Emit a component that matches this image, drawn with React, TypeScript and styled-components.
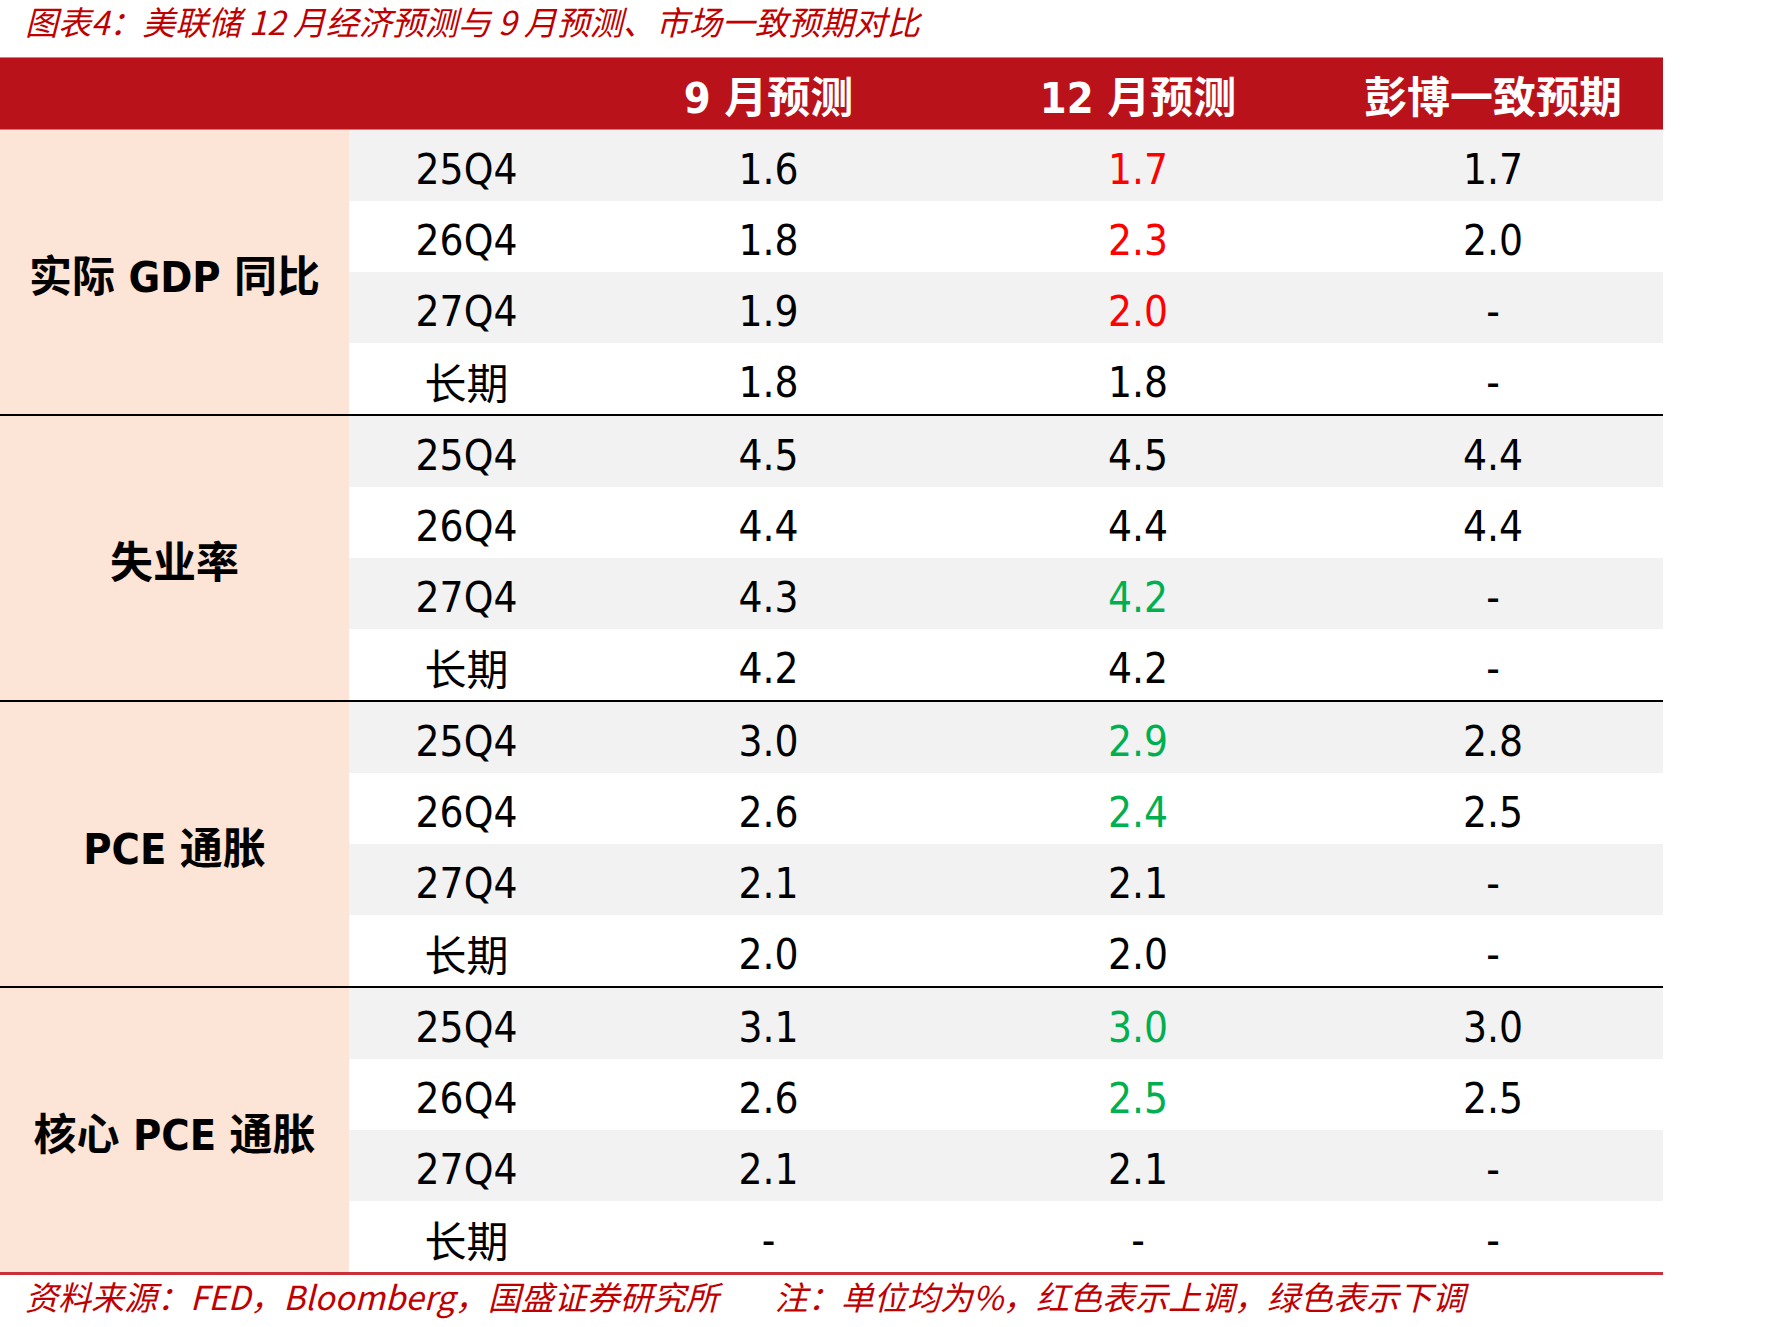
import React from 'react';
import styled, { createGlobalStyle } from 'styled-components';

const Global = createGlobalStyle`
  html, body { margin: 0; padding: 0; background: #ffffff; }
  body { width: 1784px; min-height: 1327px; }
`;

const COLS = '349px 235px 369px 370px 340px';
const TABLE_W = 1663;

const Page = styled.div`
  width: 1784px;
  display: flex;
  flex-direction: column;
`;

const Caption = styled.div`
  height: 57px;
  padding: 2px 0 0 25px;
  box-sizing: border-box;
  font-family: "Noto Sans CJK SC", sans-serif;
  font-style: italic;
  font-size: 33px;
  line-height: 38px;
  color: #c00000;
  white-space: pre;
`;

const Table = styled.div`
  width: ${TABLE_W}px;
  display: flex;
  flex-direction: column;
`;

const HeaderRow = styled.div`
  display: grid;
  grid-template-columns: ${COLS};
  height: 73px;
  box-sizing: border-box;
  background: #b9121b;
  border-top: 1px solid #d97a7f;
  border-bottom: 1px solid #d97a7f;
`;

const HeaderCell = styled.div`
  display: flex;
  align-items: center;
  justify-content: center;
  color: #ffffff;
  font-family: "DejaVu Sans Condensed", "DejaVu Sans", "Noto Sans CJK SC", sans-serif;
  font-weight: 700;
  font-size: 43px;
  white-space: pre;
`;

const Group = styled.div<{ $last?: boolean }>`
  display: grid;
  grid-template-columns: ${COLS};
  grid-template-rows: repeat(4, 71px);
  border-bottom: ${(p) => (p.$last ? '3px solid #c9303a' : '2px solid #000000')};
`;

const Label = styled.div`
  grid-row: 1 / span 4;
  grid-column: 1;
  background: #fce4d6;
  display: flex;
  align-items: center;
  justify-content: center;
  font-family: "DejaVu Sans Condensed", "DejaVu Sans", "Noto Sans CJK SC", sans-serif;
  font-weight: 700;
  font-size: 43px;
  color: #000000;
  white-space: pre;
  padding-top: 2px;
`;

const Cell = styled.div<{ $shade: boolean; $tone?: 'up' | 'down'; $cjk?: boolean }>`
  background: ${(p) => (p.$shade ? '#f2f2f2' : '#ffffff')};
  display: flex;
  align-items: center;
  justify-content: center;
  padding-top: ${(p) => (p.$cjk ? '3px' : '8px')};
  box-sizing: border-box;
  font-family: "DejaVu Sans Condensed", "DejaVu Sans", "Noto Sans CJK SC", sans-serif;
  font-size: 42px;
  color: ${(p) => (p.$tone === 'up' ? '#ff0000' : p.$tone === 'down' ? '#00b050' : '#000000')};
`;

const Footer = styled.div`
  width: ${TABLE_W}px;
  padding-left: 25px;
  box-sizing: border-box;
  display: flex;
  gap: 56px;
  font-family: "Noto Sans CJK SC", sans-serif;
  font-style: italic;
  font-size: 33px;
  line-height: 42px;
  color: #c00000;
  white-space: pre;
`;

type Tone = 'up' | 'down' | undefined;
type Row = { period: string; sep: string; dec: [string, Tone]; bbg: string };

const r = (period: string, sep: string, dec: string, bbg: string, tone?: Tone): Row => ({
  period,
  sep,
  dec: [dec, tone],
  bbg,
});

const groups: { label: string; rows: Row[] }[] = [
  {
    label: '实际 GDP 同比',
    rows: [
      r('25Q4', '1.6', '1.7', '1.7', 'up'),
      r('26Q4', '1.8', '2.3', '2.0', 'up'),
      r('27Q4', '1.9', '2.0', '-', 'up'),
      r('长期', '1.8', '1.8', '-'),
    ],
  },
  {
    label: '失业率',
    rows: [
      r('25Q4', '4.5', '4.5', '4.4'),
      r('26Q4', '4.4', '4.4', '4.4'),
      r('27Q4', '4.3', '4.2', '-', 'down'),
      r('长期', '4.2', '4.2', '-'),
    ],
  },
  {
    label: 'PCE 通胀',
    rows: [
      r('25Q4', '3.0', '2.9', '2.8', 'down'),
      r('26Q4', '2.6', '2.4', '2.5', 'down'),
      r('27Q4', '2.1', '2.1', '-'),
      r('长期', '2.0', '2.0', '-'),
    ],
  },
  {
    label: '核心 PCE 通胀',
    rows: [
      r('25Q4', '3.1', '3.0', '3.0', 'down'),
      r('26Q4', '2.6', '2.5', '2.5', 'down'),
      r('27Q4', '2.1', '2.1', '-'),
      r('长期', '-', '-', '-'),
    ],
  },
];

export default function App() {
  return (
    <Page>
      <Global />
      <Caption>图表4：美联储 12 月经济预测与 9 月预测、市场一致预期对比</Caption>
      <Table>
        <HeaderRow>
          <HeaderCell />
          <HeaderCell />
          <HeaderCell>9 月预测</HeaderCell>
          <HeaderCell>12 月预测</HeaderCell>
          <HeaderCell>彭博一致预期</HeaderCell>
        </HeaderRow>
        {groups.map((g, gi) => (
          <Group key={g.label} $last={gi === groups.length - 1}>
            <Label>{g.label}</Label>
            {g.rows.map((row, ri) => {
              const shade = ri % 2 === 0;
              return (
                <React.Fragment key={row.period}>
                  <Cell $shade={shade} $cjk={row.period === '长期'}>
                    {row.period}
                  </Cell>
                  <Cell $shade={shade}>{row.sep}</Cell>
                  <Cell $shade={shade} $tone={row.dec[1]}>
                    {row.dec[0]}
                  </Cell>
                  <Cell $shade={shade}>{row.bbg}</Cell>
                </React.Fragment>
              );
            })}
          </Group>
        ))}
      </Table>
      <Footer>
        <span>资料来源：FED，Bloomberg，国盛证券研究所</span>
        <span>注：单位均为%，红色表示上调，绿色表示下调</span>
      </Footer>
    </Page>
  );
}
